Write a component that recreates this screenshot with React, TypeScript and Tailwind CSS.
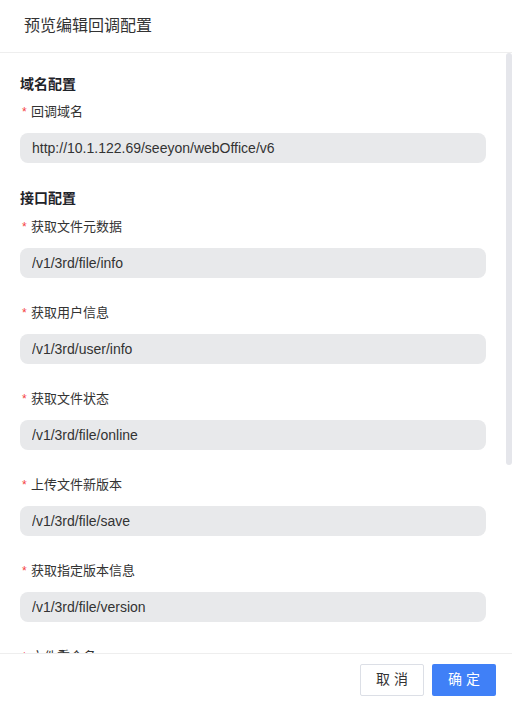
const domainField = {
  label: '回调域名',
  value: 'http://10.1.122.69/seeyon/webOffice/v6',
};

const apiFields = [
  { label: '获取文件元数据', value: '/v1/3rd/file/info' },
  { label: '获取用户信息', value: '/v1/3rd/user/info' },
  { label: '获取文件状态', value: '/v1/3rd/file/online' },
  { label: '上传文件新版本', value: '/v1/3rd/file/save' },
  { label: '获取指定版本信息', value: '/v1/3rd/file/version' },
  { label: '文件重命名', value: '/v1/3rd/file/rename' },
  { label: '获取历史版本', value: '/v1/3rd/file/history' },
  { label: '事件通知', value: '/v1/3rd/onnotify' },
];

function Field({ label, value }: { label: string; value: string }) {
  return (
    <div className="mb-[25px]">
      <div className="flex items-center h-5 text-[13px] text-[#333]">
        <span className="text-[#f53f3f] w-[11px] pl-[2px] text-[12px]">*</span>
        <span>{label}</span>
      </div>
      <input
        readOnly
        value={value}
        className="mt-[11px] block w-full h-[30px] rounded-lg bg-[#e8e9eb] px-3 text-[14px] text-[#333] outline-none"
      />
    </div>
  );
}

export default function App() {
  return (
    <div
      className="w-[512px] h-[705px] bg-white flex flex-col overflow-hidden"
      style={{ fontFamily: '"Liberation Sans", "Noto Sans CJK SC", sans-serif' }}
    >
      {/* Header */}
      <div className="h-[53px] shrink-0 border-b border-[#eeeeee] flex items-center pl-6">
        <span className="text-[16px] text-[#333]">预览编辑回调配置</span>
      </div>

      {/* Body */}
      <div className="relative flex-1 min-h-0">
        <div className="h-full overflow-hidden pt-[21px] pb-[22px] pl-5 pr-[26px]">
          <div className="h-5 flex items-center text-[14px] font-bold text-[#1f2329] mb-2">域名配置</div>
          <Field label={domainField.label} value={domainField.value} />
          <div className="h-5 flex items-center text-[14px] font-bold text-[#1f2329] mt-[2px] mb-[9px]">接口配置</div>
          {apiFields.map((f) => (
            <Field key={f.label} label={f.label} value={f.value} />
          ))}
        </div>
        {/* scrollbar thumb */}
        <div className="absolute right-0 top-0 w-[6px] h-[412px] rounded-full bg-[#e5e6eb]" />
      </div>

      {/* Footer */}
      <div className="h-[52px] shrink-0 border-t border-[#eeeeee] flex items-center justify-end gap-2 pr-4">
        <button className="w-16 h-8 rounded-[2px] border border-[#dcdfe6] bg-white text-[14px] text-[#333] tracking-[4px] pl-[4px]">
          取消
        </button>
        <button className="w-16 h-8 rounded-[2px] bg-[#4080f7] text-[14px] text-white tracking-[4px] pl-[4px]">
          确定
        </button>
      </div>
    </div>
  );
}
